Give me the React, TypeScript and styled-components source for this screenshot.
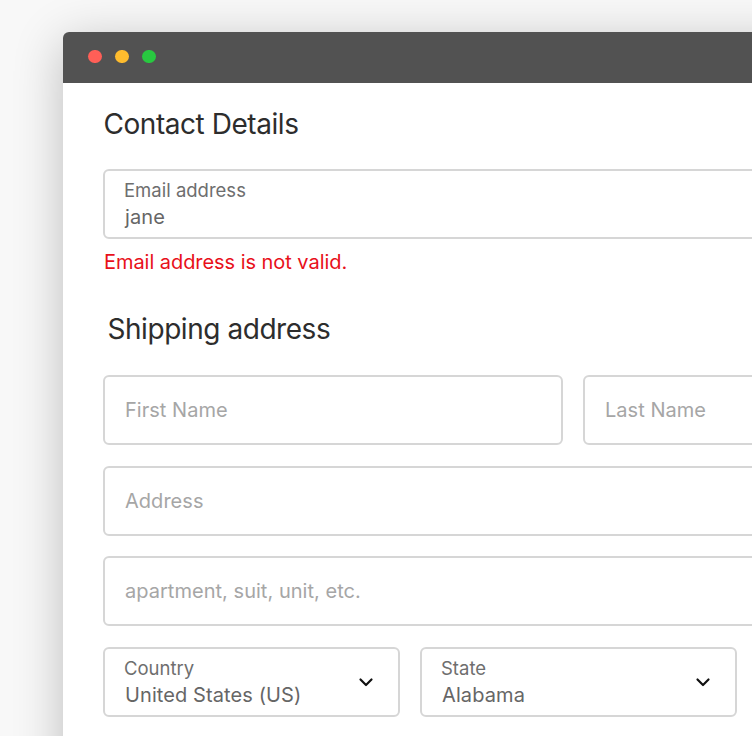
import React from "react";
import styled, { createGlobalStyle } from "styled-components";

const Global = createGlobalStyle`
  html, body { margin: 0; padding: 0; background: #f8f8f8; overflow: hidden; }
  body { font-family: Inter, "Liberation Sans", sans-serif; -webkit-font-smoothing: antialiased; }
  * { box-sizing: border-box; }
`;

const Page = styled.div`
  width: 752px;
  height: 736px;
  padding: 32px 0 0 63px;
  overflow: hidden;
`;

const Win = styled.div`
  width: 1000px;
  height: 900px;
  background: #fff;
  border-radius: 6px 6px 0 0;
  box-shadow: 0 10px 50px rgba(0, 0, 0, 0.24);
  overflow: hidden;
`;

const TitleBar = styled.div`
  height: 51px;
  background: #525252;
  display: flex;
  align-items: center;
  gap: 13.5px;
  padding: 0 0 2px 25px;
`;

const Dot = styled.span<{ $color: string }>`
  width: 13.5px;
  height: 13.5px;
  border-radius: 50%;
  background: ${(p) => p.$color};
`;

const Content = styled.div`
  padding: 0 0 0 40px;
  display: flex;
  flex-direction: column;
  width: 880px;
`;

const Heading = styled.h2<{ $inset?: number }>`
  margin: 0;
  font-size: 28px;
  line-height: 34px;
  font-weight: 400;
  letter-spacing: -0.45px;
  color: #2d2d2d;
  padding-left: ${(p) => p.$inset ?? 0.5}px;
`;

const ContactHeading = styled(Heading)`
  margin-top: 24px;
  margin-bottom: 28px;
`;

const ShippingHeading = styled(Heading)`
  margin-top: 36px;
  margin-bottom: 29px;
`;

const Field = styled.div`
  height: 70px;
  border: 2px solid #d6d6d6;
  border-radius: 6px;
  background: #fff;
  display: flex;
  flex-direction: column;
  justify-content: center;
  position: relative;
  padding: 0 19px;
  min-width: 0;
`;

const Label = styled.div`
  font-size: 18.5px;
  line-height: 24px;
  color: #6e6e6e;
  margin: 1px 0;
`;

const Value = styled.div`
  font-size: 20px;
  line-height: 28px;
  color: #666;
  padding-left: 1px;
  letter-spacing: 0.1px;
`;

const Placeholder = styled.div`
  font-size: 20px;
  line-height: 28px;
  color: #a6a6a6;
  padding-left: 1px;
  letter-spacing: 0.03px;
`;

const Error = styled.div`
  margin-top: 9px;
  font-size: 20px;
  line-height: 28px;
  color: #e8101a;
  letter-spacing: -0.05px;
  padding-left: 1px;
`;

const Stack = styled.div`
  display: flex;
  flex-direction: column;
  gap: 20.5px;
`;

const NameRow = styled.div`
  display: grid;
  grid-template-columns: 460px 1fr;
  gap: 20px;
`;

const SelectRow = styled.div`
  display: grid;
  grid-template-columns: 297px 317px;
  gap: 20px;
`;

const Chevron = styled.svg`
  position: absolute;
  right: 24px;
  top: 50%;
  transform: translateY(-50%);
  width: 16px;
  height: 16px;
`;

const Select = ({ label, value }: { label: string; value: string }) => (
  <Field>
    <Label>{label}</Label>
    <Value>{value}</Value>
    <Chevron viewBox="0 0 16 16" fill="none">
      <path d="M2.5 5.5L8 11L13.5 5.5" stroke="#111" strokeWidth="2.2" strokeLinecap="round" strokeLinejoin="round" />
    </Chevron>
  </Field>
);

export default function App() {
  return (
    <Page>
      <Global />
      <Win>
        <TitleBar>
          <Dot $color="#ff5f57" />
          <Dot $color="#febc2e" />
          <Dot $color="#28c840" />
        </TitleBar>
        <Content>
          <ContactHeading>Contact Details</ContactHeading>
          <Field>
            <Label>Email address</Label>
            <Value>jane</Value>
          </Field>
          <Error>Email address is not valid.</Error>
          <ShippingHeading $inset={4.5}>Shipping address</ShippingHeading>
          <Stack>
            <NameRow>
              <Field><Placeholder>First Name</Placeholder></Field>
              <Field><Placeholder>Last Name</Placeholder></Field>
            </NameRow>
            <Field><Placeholder>Address</Placeholder></Field>
            <Field><Placeholder>apartment, suit, unit, etc.</Placeholder></Field>
            <SelectRow>
              <Select label="Country" value="United States (US)" />
              <Select label="State" value="Alabama" />
            </SelectRow>
          </Stack>
        </Content>
      </Win>
    </Page>
  );
}
